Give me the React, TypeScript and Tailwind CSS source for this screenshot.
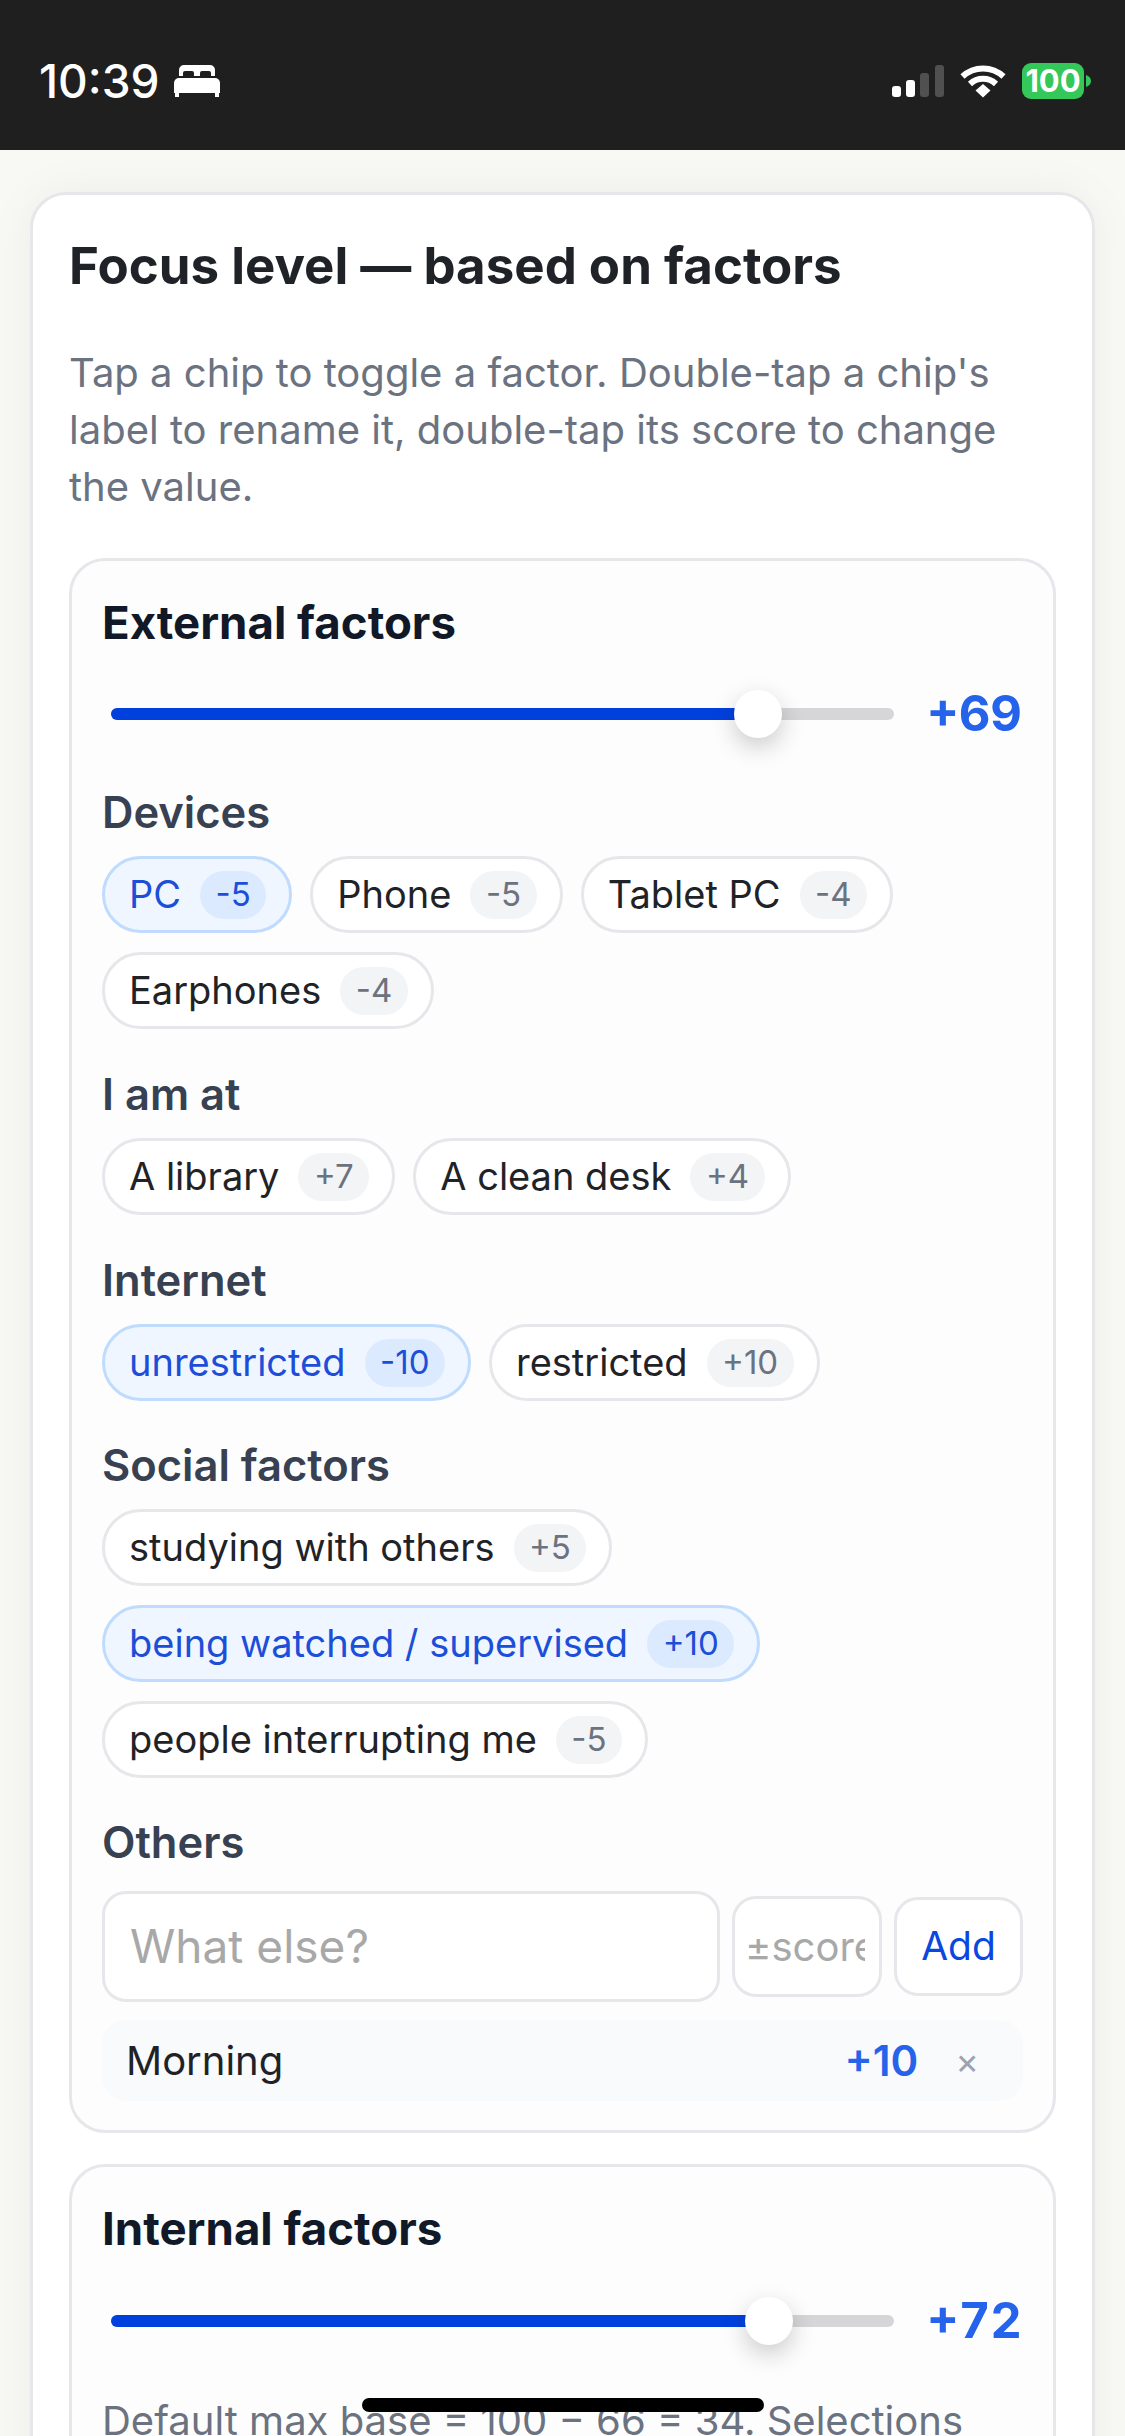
import type { ReactNode } from 'react';

type ChipData = { label: string; score: string; on?: boolean };

const devices: ChipData[] = [
  { label: 'PC', score: '-5', on: true },
  { label: 'Phone', score: '-5' },
  { label: 'Tablet PC', score: '-4' },
  { label: 'Earphones', score: '-4' },
];
const places: ChipData[] = [
  { label: 'A library', score: '+7' },
  { label: 'A clean desk', score: '+4' },
];
const internet: ChipData[] = [
  { label: 'unrestricted', score: '-10', on: true },
  { label: 'restricted', score: '+10' },
];
const social: ChipData[] = [
  { label: 'studying with others', score: '+5' },
  { label: 'being watched / supervised', score: '+10', on: true },
  { label: 'people interrupting me', score: '-5' },
];

function Chip({ label, score, on }: ChipData) {
  return (
    <div
      className={`flex h-[77px] items-center gap-[19px] rounded-full border-[3px] pl-[24px] pr-[23px] text-[38px] ${
        on ? 'border-[#bfdbfe] bg-[#eff6ff] text-[#1d4ed8]' : 'border-[#e5e7eb] bg-white text-[#1f2328]'
      }`}
    >
      <span>{label}</span>
      <span
        className={`flex h-[48px] items-center rounded-full px-[15.5px] text-[33px] ${
          on ? 'bg-[#dbeafe] text-[#1d4ed8]' : 'bg-[#f3f4f6] text-[#6b7280]'
        }`}
      >
        {score}
      </span>
    </div>
  );
}

function Group({ title, chips, className }: { title: string; chips: ChipData[]; className: string }) {
  return (
    <div className={className}>
      <div className="mb-[14px] text-[43.5px] leading-[60px] font-semibold text-[#374151]">{title}</div>
      <div className="flex flex-wrap gap-x-[18px] gap-y-[19px]">
        {chips.map((c) => (
          <Chip key={c.label} {...c} />
        ))}
      </div>
    </div>
  );
}

function Slider({ pct, left, value }: { pct: string; left: string; value: string }) {
  return (
    <div className="flex items-center gap-[30px] pl-[9px]">
      <div className="relative h-[12px] w-[783px] shrink-0 rounded-full bg-[#d6d6d8]">
        <div className={`h-full rounded-full bg-[#0040dd] ${pct}`} />
        <div className={`absolute top-[-18px] h-[48px] w-[48px] -translate-x-1/2 rounded-full bg-white shadow-[0_9px_24px_rgba(0,0,0,0.2)] ${left}`} />
      </div>
      <span className="flex-1 pr-[1px] text-right text-[49px] leading-[60px] font-bold text-[#2563eb] tabular-nums">{value}</span>
    </div>
  );
}

function Panel({ children, className }: { children: ReactNode; className?: string }) {
  return (
    <section className={`rounded-[36px] border-[3px] border-[#e5e7eb] bg-[#fdfdfd] px-[30px] ${className ?? ''}`}>
      {children}
    </section>
  );
}

function StatusBar() {
  return (
    <header className="flex h-[150px] items-center justify-between bg-[#1f1f1f] pl-[39px] pr-[34px] pt-[12px] text-white">
      <div className="flex items-center gap-[14px]">
        <span className="text-[46px] leading-none font-medium">10:39</span>
        <svg width="46" height="32" viewBox="0 0 46 32" fill="white">
          <path d="M5 11V5a5 5 0 0 1 5-5h26a5 5 0 0 1 5 5v6h-4V8a2 2 0 0 0-2-2h-7a2 2 0 0 0-2 2v3h-6V8a2 2 0 0 0-2-2h-7a2 2 0 0 0-2 2v3z" />
          <path d="M5 13h36a5 5 0 0 1 5 5v10H0V18a5 5 0 0 1 5-5z" />
          <rect x="1" y="28" width="4" height="4" />
          <rect x="41" y="28" width="4" height="4" />
        </svg>
      </div>
      <div className="flex items-center">
        <svg width="52" height="32" viewBox="0 0 52 32" className="mr-[16px]">
          <rect x="0" y="21" width="9" height="11" rx="3" fill="white" />
          <rect x="14" y="15" width="9" height="17" rx="3" fill="white" />
          <rect x="28" y="8" width="9" height="24" rx="3" fill="#505050" />
          <rect x="43" y="0" width="9" height="32" rx="3" fill="#505050" />
        </svg>
        <svg width="46" height="34" viewBox="0 0 46 34" className="mr-[16px]" fill="none" stroke="white" strokeWidth="6">
          <path d="M2.5 12.5a30 30 0 0 1 41 0" />
          <path d="M10 20a19 19 0 0 1 26 0" />
          <path d="M15.5 26.5 23 20l7.5 6.5L23 33.5z" fill="white" strokeWidth="0" />
        </svg>
        <div className="flex h-[36px] w-[62px] items-center justify-center rounded-[9px] bg-[#34c759] text-[31px] font-bold">100</div>
        <svg width="5" height="12" viewBox="0 0 5 12" className="ml-[2px]">
          <path d="M0 0c3 1 5 3 5 6s-2 5-5 6z" fill="#34c759" />
        </svg>
      </div>
    </header>
  );
}

export default function App() {
  return (
    <div className="relative h-[2436px] w-[1125px] overflow-hidden bg-[#f8f9f4] font-['Inter',sans-serif]">
      <StatusBar />
      <main className="mx-[30px] mt-[42px] rounded-[36px] border-[3px] border-[#e5e7eb] bg-white px-[36px] pt-[39px] shadow-[0_0_48px_rgba(0,0,0,0.05)]">
        <h1 className="text-[51px] leading-[64px] font-bold text-[#1f2328]">Focus level — based on factors</h1>
        <p className="mt-[46px] text-[40px] leading-[57px] text-[#6b7280]">
          Tap a chip to toggle a factor. Double-tap a chip's label to rename it, double-tap its score to change the value.
        </p>
        <Panel className="mt-[43px] pt-[32px] pb-[29px]">
          <h2 className="text-[45.6px] leading-[60px] font-bold text-[#111827]">External factors</h2>
          <div className="mt-[31px]">
            <Slider pct="w-[82.6%]" left="left-[82.6%]" value="+69" />
          </div>
          <Group className="mt-[38px]" title="Devices" chips={devices} />
          <Group className="mt-[35px]" title="I am at" chips={places} />
          <Group className="mt-[35px]" title="Internet" chips={internet} />
          <Group className="mt-[34px]" title="Social factors" chips={social} />
          <div className="mt-[34px]">
            <div className="mb-[19px] text-[43.5px] leading-[60px] font-semibold text-[#374151]">Others</div>
            <div className="flex items-center gap-[12px]">
              <div className="flex h-[111px] w-[618px] items-center rounded-[24px] border-[3px] border-[#e5e7eb] bg-white px-[25px] text-[46px] text-[#a8a8a8]">
                What else?
              </div>
              <div className="flex h-[101px] w-[150px] items-center overflow-hidden rounded-[24px] border-[3px] border-[#e5e7eb] bg-white px-[12px] text-[40px] whitespace-nowrap text-[#a8a8a8]">
                <span className="-ml-[2px] w-full overflow-hidden">±score</span>
              </div>
              <div className="flex h-[99px] w-[129px] items-center justify-center rounded-[24px] border-[3px] border-[#e5e7eb] bg-white text-[39px] text-[#0a47e0]">
                Add
              </div>
            </div>
            <div className="mt-[18px] flex h-[81px] items-center rounded-[24px] bg-[#f9fafb] pl-[24px] text-[40px] text-[#1f2328]">
              <span className="flex-1">Morning</span>
              <span className="text-[42px] font-semibold text-[#2563eb]">+10</span>
              <span className="mr-[44px] ml-[37px] text-[36px] text-[#9ca3af]">×</span>
            </div>
          </div>
        </Panel>
        <Panel className="mt-[31px] pt-[32px] pb-[30px]">
          <h2 className="text-[45.6px] leading-[60px] font-bold text-[#111827]">Internal factors</h2>
          <div className="mt-[32px]">
            <Slider pct="w-[84%]" left="left-[84%]" value="+72" />
          </div>
          <p className="mt-[41px] text-[40px] leading-[57px] text-[#6b7280]">
            Default max base = 100 − 66 = 34. Selections adjust the value.
          </p>
        </Panel>
      </main>
      <div className="absolute top-[2398px] left-[362px] h-[14px] w-[402px] rounded-full bg-black" />
    </div>
  );
}
